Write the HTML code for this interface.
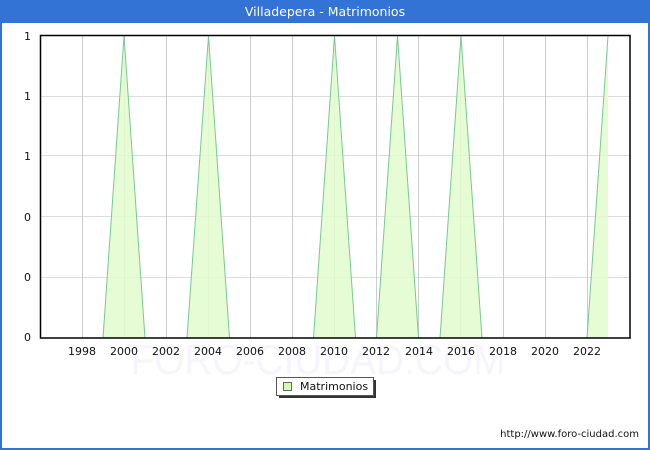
<!DOCTYPE html>
<html><head><meta charset="utf-8"><style>
html,body{margin:0;padding:0;background:#fff;}
svg{display:block;font-family:"DejaVu Sans","Liberation Sans",sans-serif;}
</style></head><body>
<svg width="650" height="450" viewBox="0 0 650 450" xmlns="http://www.w3.org/2000/svg">
<rect x="0" y="0" width="650" height="450" fill="#fff"/>
<rect x="1" y="1" width="648" height="448" fill="none" stroke="#3373d6" stroke-width="2"/>
<rect x="0" y="0" width="650" height="23" fill="#3373d6"/>
<text x="325" y="16" text-anchor="middle" fill="#fff" font-size="12.5">Villadepera - Matrimonios</text>
<text x="318" y="374" text-anchor="middle" fill="#f5f5fb" font-size="42" font-family="'Liberation Sans',sans-serif" textLength="375" lengthAdjust="spacingAndGlyphs">FORO-CIUDAD.COM</text>
<g stroke="#dddddd" stroke-width="1">
<line x1="40" y1="96.5" x2="630" y2="96.5"/>
<line x1="40" y1="155.5" x2="630" y2="155.5"/>
<line x1="40" y1="216.5" x2="630" y2="216.5"/>
<line x1="40" y1="277.5" x2="630" y2="277.5"/>
</g>
<g stroke="#cccccc" stroke-width="1">
<line x1="82.5" y1="35" x2="82.5" y2="338"/><line x1="124.5" y1="35" x2="124.5" y2="338"/>
<line x1="166.5" y1="35" x2="166.5" y2="338"/><line x1="208.5" y1="35" x2="208.5" y2="338"/>
<line x1="250.5" y1="35" x2="250.5" y2="338"/><line x1="292.5" y1="35" x2="292.5" y2="338"/>
<line x1="334.5" y1="35" x2="334.5" y2="338"/><line x1="376.5" y1="35" x2="376.5" y2="338"/>
<line x1="418.5" y1="35" x2="418.5" y2="338"/><line x1="460.5" y1="35" x2="460.5" y2="338"/>
<line x1="503.5" y1="35" x2="503.5" y2="338"/><line x1="545.5" y1="35" x2="545.5" y2="338"/>
<line x1="587.5" y1="35" x2="587.5" y2="338"/>
</g>
<g fill="#e2fccc" fill-opacity="0.85" stroke="#78c896" stroke-width="1">
<polygon points="103,338 124,36 145,338"/>
<polygon points="187,338 208.5,36 229.5,338"/>
<polygon points="313.5,338 334.5,36 355.5,338"/>
<polygon points="376.5,338 397.5,36 418.5,338"/>
<polygon points="440,338 461,36 482,338"/>
</g>
<polygon points="587,338 608,36 608,338" fill="#e2fccc" fill-opacity="0.85"/>
<line x1="587" y1="338" x2="608" y2="36" stroke="#78c896" stroke-width="1"/>
<rect x="40.5" y="35.5" width="589.5" height="302.5" fill="none" stroke="#000" stroke-width="1.5"/>
<g font-size="11" fill="#111" text-anchor="end">
<text x="31" y="40">1</text><text x="31" y="100">1</text><text x="31" y="160">1</text>
<text x="31" y="221">0</text><text x="31" y="281">0</text><text x="31" y="341">0</text>
</g>
<g font-size="11" fill="#111" text-anchor="middle">
<text x="82" y="355">1998</text><text x="124" y="355">2000</text><text x="166" y="355">2002</text>
<text x="208" y="355">2004</text><text x="250" y="355">2006</text><text x="292" y="355">2008</text>
<text x="334" y="355">2010</text><text x="376" y="355">2012</text><text x="419" y="355">2014</text>
<text x="461" y="355">2016</text><text x="503" y="355">2018</text><text x="545" y="355">2020</text>
<text x="587" y="355">2022</text>
</g>
<rect x="279" y="380" width="97" height="18" fill="#333"/>
<rect x="276.5" y="377.5" width="97" height="18" fill="#fff" stroke="#555" stroke-width="1"/>
<rect x="283.5" y="382.5" width="8" height="8" fill="#d8f8b8" stroke="#666" stroke-width="1"/>
<text x="300" y="390" font-size="11" fill="#111">Matrimonios</text>
<text x="639" y="437" text-anchor="end" font-size="10" fill="#111">http://www.foro-ciudad.com</text>
</svg>
</body></html>
